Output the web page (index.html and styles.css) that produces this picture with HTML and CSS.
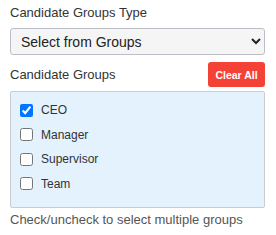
FILE: index.html
```html
<!DOCTYPE html>
<html>
<head>
<meta charset="utf-8">
<link rel="stylesheet" href="styles.css">
</head>
<body>
<div class="panel">
  <div class="title">Candidate Groups Type</div>
  <select class="type-select">
    <option>Select from Groups</option>
  </select>
  <div class="groups-header">
    <span class="groups-label">Candidate Groups</span>
    <button class="clear-btn">Clear All</button>
  </div>
  <div class="groups-box">
    <label class="group-item"><input type="checkbox" checked><span>CEO</span></label>
    <label class="group-item"><input type="checkbox"><span>Manager</span></label>
    <label class="group-item"><input type="checkbox"><span>Supervisor</span></label>
    <label class="group-item"><input type="checkbox"><span>Team</span></label>
  </div>
  <div class="helper">Check/uncheck to select multiple groups</div>
</div>
</body>
</html>
```
FILE: styles.css
```css
html, body {
  margin: 0;
  padding: 0;
  background: #ffffff;
}
body {
  font-family: "Liberation Sans", Arial, sans-serif;
  color: #333333;
}
.panel {
  width: 255px;
  padding: 5px 0 0 10px;
  display: flex;
  flex-direction: column;
}
.title {
  font-size: 13px;
  line-height: 15px;
  margin-bottom: 8px;
}
.type-select {
  height: 27px;
  width: 255px;
  box-sizing: border-box;
  font-family: "Liberation Sans", Arial, sans-serif;
  font-size: 14px;
  color: #222;
  background: #f5f5f5;
  border: 1px solid #bdbdc8;
  border-radius: 3px;
  padding: 0 6px;
  margin: 0;
}
.groups-header {
  margin-top: 7px;
  height: 25px;
  display: flex;
  align-items: center;
  justify-content: space-between;
  margin-bottom: 4px;
}
.groups-label {
  font-size: 13px;
}
.clear-btn {
  height: 25px;
  width: 57px;
  padding: 0;
  border: none;
  border-radius: 3px;
  background: #f44336;
  color: #ffffff;
  font-family: "Liberation Sans", Arial, sans-serif;
  font-weight: bold;
  font-size: 10.5px;
}
.groups-box {
  box-sizing: border-box;
  height: 117px;
  background: #e3f2fd;
  border: 1px solid #cccccc;
  border-radius: 2px;
  padding: 8px 5px;
  display: flex;
  flex-direction: column;
  gap: 4.5px;
}
.group-item {
  height: 20px;
  display: flex;
  align-items: center;
  font-size: 12px;
  color: #333;
}
.group-item input {
  margin: 0 3px 0 4px;
  width: 13px;
  height: 13px;
}
.group-item span {
  margin-left: 5px;
}
.helper {
  margin-top: 4px;
  font-size: 13px;
  line-height: 15px;
  color: #555555;
}
```
